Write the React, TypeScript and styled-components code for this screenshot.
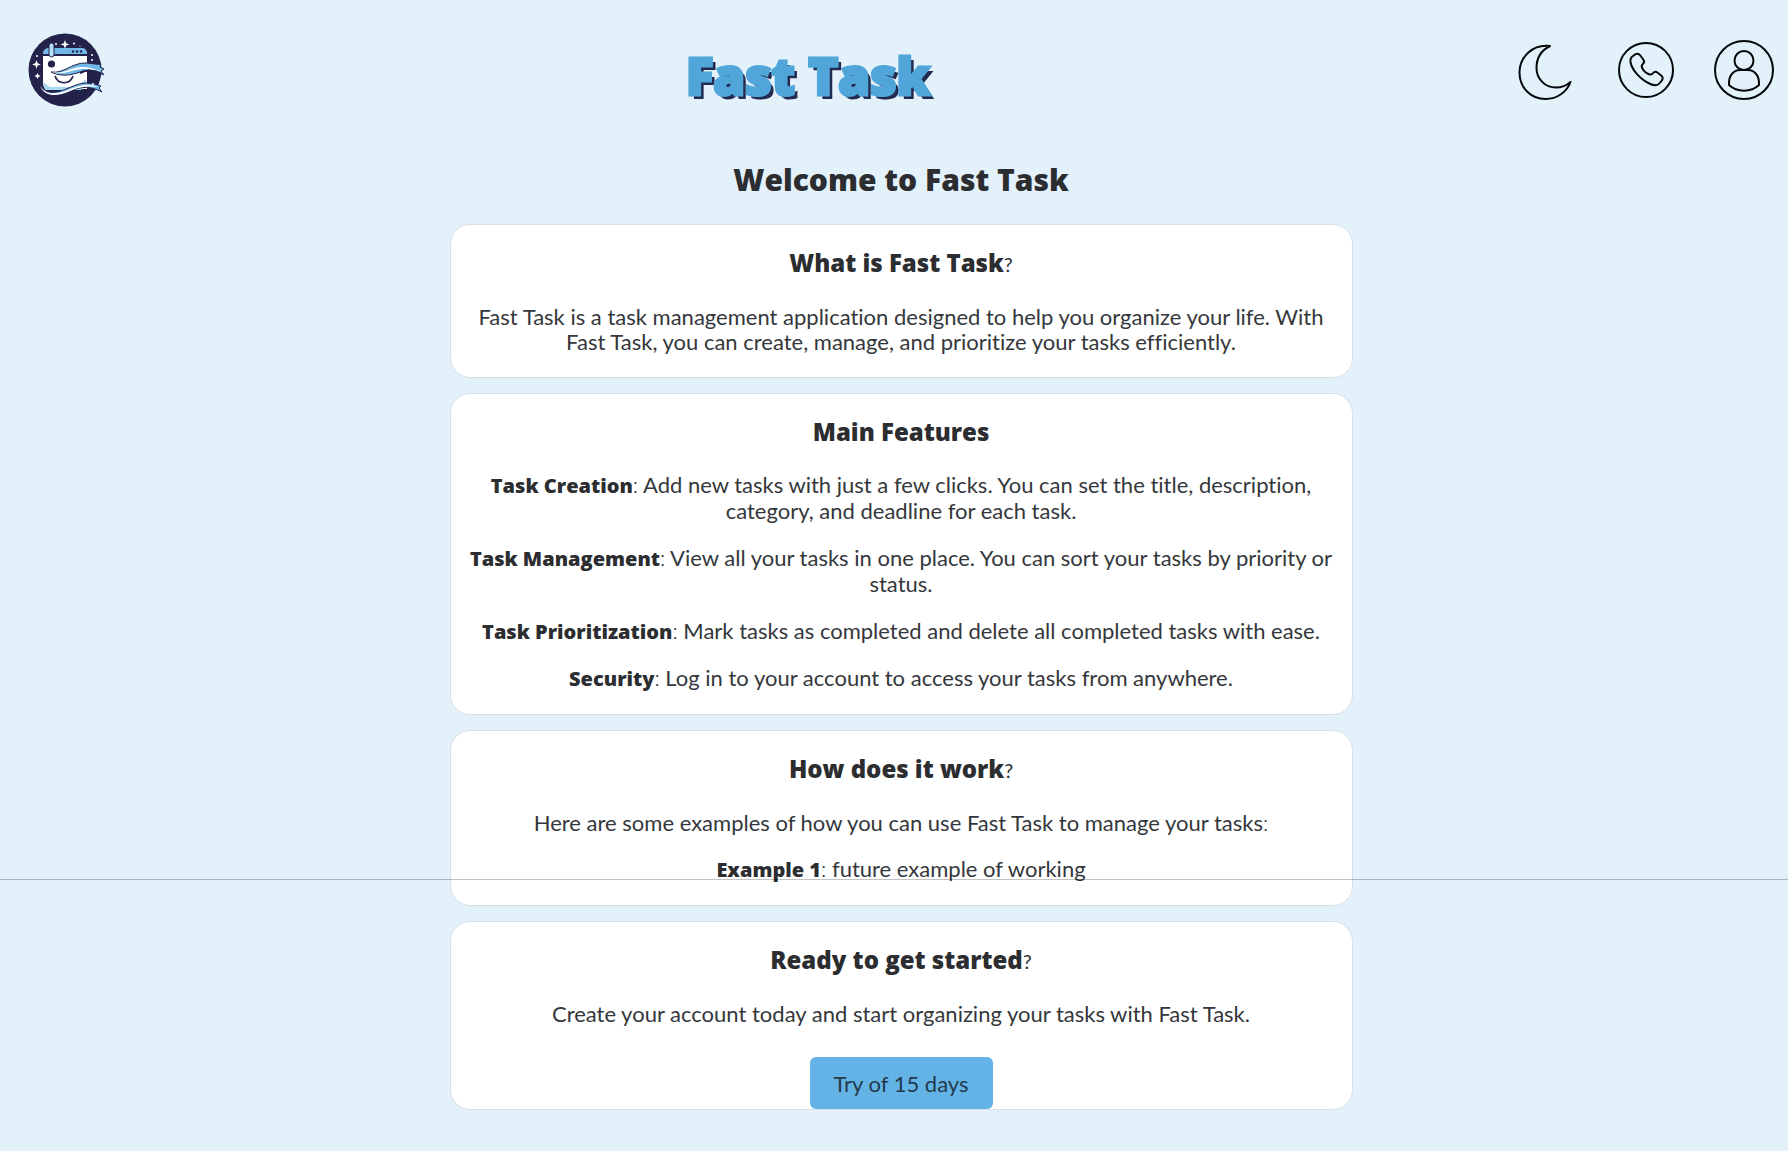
import React from 'react';
import styled, { createGlobalStyle } from 'styled-components';

const GlobalStyle = createGlobalStyle`
  * { box-sizing: border-box; }
  body {
    margin: 0;
    background: #e2f1fa;
    color: #2b2d30;
    font-family: Lato, sans-serif;
    font-size: 22px;
    line-height: 25px;
    font-variant-ligatures: none;
  }
`;

const display = '"Open Sans", Inter, sans-serif';

const Header = styled.header`
  display: flex;
  align-items: center;
  justify-content: space-between;
  height: 140px;
  padding: 0 14px 0 28px;
`;

const HomeLink = styled.a`
  display: block;
  svg { display: block; }
`;

const Brand = styled.p`
  margin: 0;
  padding: 10px 6px 0 0;
  font-family: ${display};
  font-size: 51px;
  line-height: 60px;
  font-weight: 800;
  color: #50a5d9;
  -webkit-text-stroke: 3px #50a5d9;
  text-shadow: 4px 4px 0 #232a50;
`;

const Actions = styled.nav`
  display: flex;
  align-items: center;
  gap: 40px;
`;

const IconButton = styled.button`
  display: block;
  padding: 0;
  border: 0;
  background: none;
  color: #05080b;
  cursor: pointer;
  svg { display: block; }
`;

const Main = styled.main`
  display: flex;
  flex-direction: column;
  align-items: center;
  gap: 15px;
  padding: 20px 0 40px 14px;
`;

const PageTitle = styled.h1`
  margin: 0 0 9px;
  font-family: ${display};
  font-size: 30px;
  line-height: 40px;
  font-weight: 800;
`;

const Card = styled.section<{ $flush?: boolean }>`
  display: flex;
  flex-direction: column;
  align-items: center;
  gap: 21px;
  width: 100%;
  max-width: 903px;
  padding: 23px 14px ${(p) => (p.$flush ? 0 : 23)}px;
  border: 1px solid #d9dfe4;
  border-radius: 20px;
  background: #fff;
  text-align: center;
`;

const CardTitle = styled.h2`
  margin: 0 0 4px;
  font-family: ${display};
  font-size: 24px;
  line-height: 30px;
  font-weight: 800;
`;

const Text = styled.p`
  margin: 0;
  color: #34373b;
`;

const Entry = styled(Text)`
  line-height: 26px;
`;

const Term = styled.strong`
  font-family: ${display};
  font-size: 20px;
  line-height: 20px;
  font-weight: 800;
  color: #2b2d30;
`;

const Mark = styled.span`
  font-family: Lato, sans-serif;
  font-size: 20px;
  font-weight: 400;
`;

const Colon = styled.span`
  font-weight: 300;
`;

const TrialButton = styled.button`
  height: 52px;
  margin-top: 10px;
  padding: 0 24px;
  border: 0;
  border-radius: 6px;
  background: #64b3e6;
  color: #23394a;
  font: inherit;
  cursor: pointer;
`;

const FooterRule = styled.hr`
  position: absolute;
  top: 879px;
  left: 0;
  right: 0;
  margin: 0;
  border: 0;
  border-top: 1px solid rgba(0, 0, 0, 0.24);
`;

const Logo = () => (
  <svg width="76" height="74" viewBox="0 0 76 74" aria-hidden="true">
    <circle cx="37" cy="37" r="36.5" fill="#23224a" />
    <path d="M15 22q0-7 7-7h31q6 0 6 7v34H20q-5 0-5-6z" fill="#fff" />
    <path d="M15 21q0-6 7-6h31q6 0 6 7H15z" fill="#70b8e5" />
    <path d="M15 22h44" stroke="#23224a" strokeWidth="2" />
    <path d="M15 49l2 8h36l5-5v-6l-9 8H22z" fill="#a9d8f3" />
    <rect x="21" y="10" width="5" height="14" rx="2.5" fill="#b5e0f6" stroke="#23224a" />
    <g fill="#23224a"><circle cx="23.500" cy="31" r="3.600" /><circle cx="45" cy="18.500" r="1.200" /><circle cx="49" cy="18.500" r="1.200" /><circle cx="53" cy="18.500" r="1.200" /></g>
    <path d="M23 39c13 2 20-9 34-9 8 0 10 2 16 1l-1 3 4 2-3 2 3 4c-9-6-17-6-27-2-9 3-18 3-26-1z" fill="#70b8e5" stroke="#23224a" />
    <path d="M22 39c15 3 21-6 34-5 9 0 11 4 18 4-8 1-12-3-20-2-12 1-19 7-32 3z" fill="#fff" />
    <path d="M52 40c8-4 15-3 22 1" fill="none" stroke="#23224a" strokeWidth="2" />
    <path d="M27 43c3 9 15 9 18 0" fill="none" stroke="#23224a" strokeWidth="1.700" />
    <path d="M12 53c6 9 17 7 26 3 13-5 18-9 35-3l-2 2 3 4c-12-6-19-6-31-1-13 5-27 6-31-5z" fill="#70b8e5" stroke="#23224a" />
    <path d="M12 53c7 10 18 8 28 4 12-5 20-7 30-3-9-1-16-1-28 4-13 6-25 6-30-5z" fill="#fff" />
    <g fill="#fff">
      <path d="M37 7l1.200 3.200 3.200 1.200-3.200 1.200-1.200 3.200-1.200-3.200-3.200-1.200 3.200-1.200zM8.500 27l1.200 3.200 3.200 1.200-3.200 1.200-1.200 3.200-1.200-3.200-3.200-1.200 3.200-1.200zM9.500 40l1 2 2 1-2 1-1 2-1-2-2-1 2-1z" />
      <circle cx="28" cy="11" r="1" /><circle cx="46" cy="10.500" r="1" /><circle cx="52" cy="13" r=".6" /><circle cx="9" cy="23" r="1" /><circle cx="64" cy="22" r="1" /><circle cx="64" cy="27" r="1" /><circle cx="65" cy="51" r="1" />
    </g>
  </svg>
);

const MoonIcon = () => (
  <svg width="60" height="60" viewBox="0 0 60 60" fill="none" stroke="currentColor" strokeWidth="2" strokeLinejoin="round" aria-hidden="true">
    <path d="M32 6C15 4 1.500 16.500 1.500 32.500 1.500 48 13 59 27.500 59 39 59 49 52 52.500 42c-4.500 4-9 5.500-14.500 5.500C27 47.500 18.500 39 18.500 28 18.500 18 23 10.500 32 6z" />
  </svg>
);

const PhoneIcon = () => (
  <svg width="56" height="56" viewBox="0 0 56 56" fill="none" stroke="currentColor" strokeWidth="2" strokeLinejoin="round" aria-hidden="true">
    <circle cx="28" cy="28" r="27" />
    <path d="M15 14l2-1.500c2-1.300 4-.8 5.300 1l3 4c1.200 1.500 1 3-.3 4.200-1.700 1.500-1.800 2.500-.8 4.500 1.400 3 3.700 5 6.800 6 2 .8 3 .4 4.200-1.200 1.200-1.500 2.800-1.500 4.500-.3l3.500 2.800c1.800 1.500 2 3.400.6 5l-2 2.500c-2 2.500-5.500 2.800-9.500 1C23 38 14 28.500 12.500 20c-.4-2.800.5-4.700 2.500-6z" />
  </svg>
);

const UserIcon = () => (
  <svg width="60" height="60" viewBox="0 0 60 60" fill="none" stroke="currentColor" strokeWidth="2" strokeLinejoin="round" aria-hidden="true">
    <circle cx="30" cy="30" r="29" />
    <circle cx="30" cy="20.500" r="9.500" />
    <path d="M15 45V43C15 35 20 30 26 30h8c6 0 11 5 11 13v2c-8 7.500-22 7.500-30 0z" />
  </svg>
);

const features = [
  ['Task Creation', 'Add new tasks with just a few clicks. You can set the title, description, category, and deadline for each task.'],
  ['Task Management', 'View all your tasks in one place. You can sort your tasks by priority or status.'],
  ['Task Prioritization', 'Mark tasks as completed and delete all completed tasks with ease.'],
  ['Security', 'Log in to your account to access your tasks from anywhere.'],
];

const Definition = ({ term, text }: { term: string; text: string }) => (
  <Entry><Term>{term}</Term><Colon>:</Colon> {text}</Entry>
);

export default function App() {
  return (
    <>
      <GlobalStyle />
      <Header>
        <HomeLink href="#" aria-label="Fast Task home"><Logo /></HomeLink>
        <Brand>Fast Task</Brand>
        <Actions>
          <IconButton aria-label="Dark mode"><MoonIcon /></IconButton>
          <IconButton aria-label="Contact"><PhoneIcon /></IconButton>
          <IconButton aria-label="Account"><UserIcon /></IconButton>
        </Actions>
      </Header>
      <Main>
        <PageTitle>Welcome to Fast Task</PageTitle>
        <Card>
          <CardTitle>What is Fast Task<Mark>?</Mark></CardTitle>
          <Text>Fast Task is a task management application designed to help you organize your life. With Fast Task, you can create, manage, and prioritize your tasks efficiently.</Text>
        </Card>
        <Card>
          <CardTitle>Main Features</CardTitle>
          {features.map(([term, text]) => <Definition key={term} term={term} text={text} />)}
        </Card>
        <Card>
          <CardTitle>How does it work<Mark>?</Mark></CardTitle>
          <Text>Here are some examples of how you can use Fast Task to manage your tasks<Colon>:</Colon></Text>
          <Definition term="Example 1" text="future example of working" />
        </Card>
        <Card $flush>
          <CardTitle>Ready to get started<Mark>?</Mark></CardTitle>
          <Text>Create your account today and start organizing your tasks with Fast Task.</Text>
          <TrialButton>Try of 15 days</TrialButton>
        </Card>
      </Main>
      <FooterRule />
    </>
  );
}
